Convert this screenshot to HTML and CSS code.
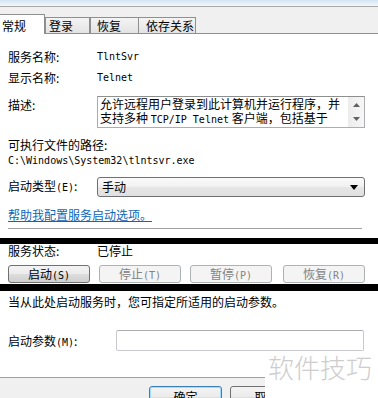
FILE: index.html
```html
<!DOCTYPE html>
<html lang="zh-CN">
<head>
<meta charset="utf-8">
<title>Telnet 属性</title>
<link rel="stylesheet" href="styles.css">
</head>
<body>
<div class="dialog">
  <div class="titlebar"></div>
  <div class="tabstrip">
    <div class="tab active">常规</div>
    <div class="tab t2">登录</div>
    <div class="tab t3">恢复</div>
    <div class="tab t4">依存关系</div>
  </div>
  <div class="panel">
    <div class="row r1"><span class="label">服务名称:</span><span class="en">TlntSvr</span></div>
    <div class="row r2"><span class="label">显示名称:</span><span class="en">Telnet</span></div>
    <div class="desc">
      <span class="label">描述:</span>
      <div class="textbox">
        <div class="txt">
          <div class="tl">允许远程用户登录到此计算机并运行程序，并</div>
          <div class="tl">支持多种 <span class="en">TCP/IP Telnet</span> 客户端，包括基于</div>
        </div>
        <div class="scroll">
          <svg width="7" height="4" viewBox="0 0 7 4"><path d="M0 4 L3.5 0 L7 4 Z" fill="#606060"/></svg>
          <svg width="7" height="4" viewBox="0 0 7 4"><path d="M0 0 L3.5 4 L7 0 Z" fill="#606060"/></svg>
        </div>
      </div>
    </div>
    <div class="line exe">可执行文件的路径:</div>
    <div class="line path en">C:\Windows\System32\tlntsvr.exe</div>
    <div class="row startup">
      <span class="label">启动类型<span class="en">(E)</span>:</span>
      <div class="select"><span>手动</span>
        <svg width="8" height="5" viewBox="0 0 8 5"><path d="M0 0 L8 0 L4 5 Z" fill="#000"/></svg>
      </div>
    </div>
    <div class="line link">帮助我配置服务启动选项。</div>
    <div class="sep"></div>
  </div>
  <div class="blackbar b1"></div>
  <div class="status"><span class="label">服务状态:</span><span>已停止</span></div>
  <div class="buttons">
    <div class="btn">启动<span class="en">(S)</span></div>
    <div class="btn disabled">停止<span class="en">(T)</span></div>
    <div class="btn disabled">暂停<span class="en">(P)</span></div>
    <div class="btn disabled">恢复<span class="en">(R)</span></div>
  </div>
  <div class="blackbar b2"></div>
  <div class="lower">
    <div class="line hint">当从此处启动服务时，您可指定所适用的启动参数。</div>
    <div class="param">
      <span class="plabel">启动参数<span class="en">(M)</span>:</span>
      <div class="input"></div>
    </div>
  </div>
  <div class="footer">
    <div class="fbtn default">确定</div>
    <div class="fbtn">取消</div>
  </div>
  <div class="watermark">软件技巧</div>
</div>
</body>
</html>
```
FILE: styles.css
```css
* { box-sizing: border-box; }
body {
  margin: 0;
  font-family: "Noto Sans CJK SC", "Noto Sans", sans-serif;
  font-size: 12px;
  color: #000;
  background: #fff;
}
.dialog {
  position: relative;
  width: 378px;
  height: 398px;
  overflow: hidden;
  background: #fff;
}
.en {
  font-family: "DejaVu Sans Mono", "Liberation Mono", monospace;
  font-size: 10px;
}
.titlebar {
  height: 6px;
  background: linear-gradient(#d3e4f2, #f3f8fc);
}
.tabstrip {
  height: 28px;
  border-top: 1px solid #a9a9a9;
  border-bottom: 1px solid #8e8f8f;
  background: #f0f0f0;
  display: flex;
  align-items: flex-end;
}
.tab {
  height: 16px;
  border: 1px solid #8e8f8f;
  border-bottom: none;
  background: linear-gradient(#f4f4f4, #e3e3e3);
  line-height: 15px;
  padding-left: 3px;
  white-space: nowrap;
}
.tab.active {
  position: relative;
  z-index: 1;
  width: 45px;
  height: 20px;
  margin-bottom: -1px;
  border-left: none;
  background: #fff;
  padding-left: 2px;
  line-height: 21px;
}
.t2 { width: 45px; }
.t3 { width: 49px; padding-left: 6px; }
.t4 { width: 58px; margin-left: -1px; padding-left: 7px; }

.panel {
  padding: 0 8px 9px 8px;
  background: #fff;
}
.row {
  display: flex;
  align-items: center;
  height: 16px;
  line-height: 16px;
}
.label { width: 89px; flex: none; }
.r1 { margin-top: 15px; }
.r2 { margin-top: 5px; }
.desc {
  display: flex;
  margin-top: 10px;
}
.desc .label { padding-top: 1px; line-height: 16px; }
.textbox {
  width: 268px;
  height: 32px;
  border: 1px solid #abadb3;
  border-top-color: #8e8f8f;
  display: flex;
}
.txt {
  flex: 1;
  padding: 0 0 0 2px;
}
.tl {
  height: 14px;
  line-height: 14px;
  white-space: nowrap;
}
.scroll {
  width: 16px;
  flex: none;
  background: linear-gradient(90deg, #ececec, #f7f7f7);
  display: flex;
  flex-direction: column;
  align-items: center;
  justify-content: space-between;
  padding: 6px 0 6px 0;
}
.line { height: 16px; line-height: 16px; }
.exe { margin-top: 9px; }
.path { white-space: nowrap; }
.startup { margin-top: 8px; height: 20px; }
.select {
  width: 268px;
  height: 20px;
  border: 1px solid #707070;
  border-radius: 3px;
  background: linear-gradient(#fbfbfb, #f0f0f0 50%, #e6e6e6 51%, #e0e0e0);
  display: flex;
  align-items: center;
  justify-content: space-between;
  padding: 0 6px 0 4px;
  line-height: 18px;
}
.link {
  margin-top: 10px;
  color: #0f66b6;
  text-decoration: underline;
}
.sep {
  margin-top: 5px;
  width: 354px;
  height: 1px;
  background: #a0a0a0;
}
.blackbar { background: #000; width: 378px; }
.b1 { height: 6px; }
.b2 { height: 7px; margin-top: 1px; }
.status {
  display: flex;
  height: 14px;
  line-height: 13px;
  padding-left: 8px;
}
.buttons {
  display: flex;
  gap: 9px;
  margin-top: 7px;
  padding-left: 8px;
}
.btn {
  width: 82px;
  height: 18px;
  border: 1px solid #707070;
  border-radius: 3px;
  background: linear-gradient(#f3f3f3, #ebebeb 50%, #dddddd 51%, #cfcfcf);
  text-align: center;
  line-height: 16px;
}
.btn.disabled {
  border-color: #adb2b5;
  background: #f4f4f4;
  color: #838383;
}
.btn:last-child { margin-left: 2px; }
.lower { padding-left: 8px; }
.hint { margin-top: 3px; }
.param {
  display: flex;
  align-items: center;
  margin-top: 20px;
  height: 21px;
}
.plabel { width: 108px; flex: none; }
.input {
  width: 248px;
  height: 21px;
  border: 1px solid #c8cacf;
  border-top-color: #abadb3;
  border-radius: 2px;
  background: #fff;
}
.footer {
  margin-top: 26px;
  border-top: 1px solid #a0a0a0;
  background: #f0f0f0;
  height: 30px;
  display: flex;
  gap: 8px;
  padding: 8px 0 0 149px;
}
.fbtn {
  width: 73px;
  height: 22px;
  border: 1px solid #707070;
  border-radius: 3px;
  background: linear-gradient(#f3f3f3, #ebebeb 50%, #dddddd 51%, #cfcfcf);
  text-align: center;
  line-height: 20px;
}
.fbtn.default {
  border-color: #3c7fb1;
  box-shadow: inset 0 0 0 1px #9fdcfd;
}
.watermark {
  position: absolute;
  left: 265px;
  top: 352px;
  right: 0;
  bottom: 0;
  background: #fff;
  color: #cdcdcd;
  font-size: 26px;
  font-weight: 300;
  line-height: 30px;
  padding-left: 3px;
  white-space: nowrap;
}
```
